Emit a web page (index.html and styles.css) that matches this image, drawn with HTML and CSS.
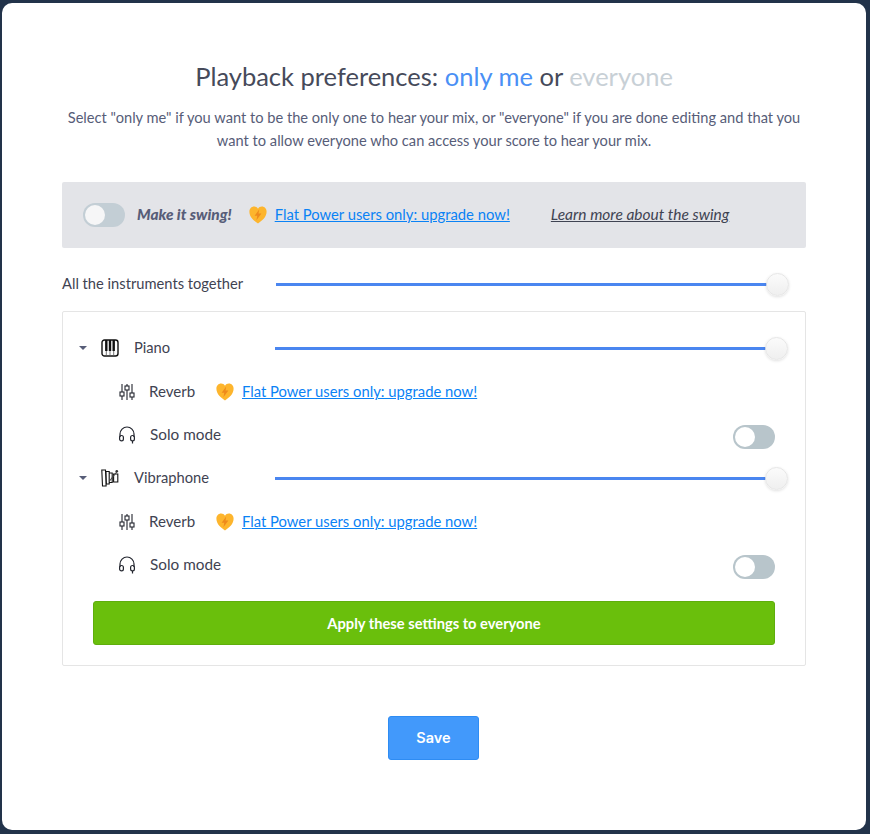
FILE: index.html
```html
<!DOCTYPE html>
<html lang="en">
<head>
<meta charset="utf-8">
<title>Playback preferences</title>
<link rel="stylesheet" href="styles.css">
</head>
<body>
<svg class="defs" width="0" height="0" aria-hidden="true">
  <symbol id="heart" viewBox="0 0 18 18">
    <path d="M9 17.6C4.6 14.4.4 11 .4 5.8.4 2.8 2.5.6 5.1.6 6.8.6 8.2 1.5 9 2.8 9.8 1.5 11.2.6 12.9.6c2.6 0 4.7 2.2 4.7 5.2 0 5.2-4.2 8.6-8.6 11.8z" fill="#fdb52d"/>
    <path d="M10.2 3.6 5.6 9.8h2.7L7.4 14.2 12.4 7.6H9.5z" fill="#ee8a1d"/>
  </symbol>
  <symbol id="mixer" viewBox="0 0 16 18">
    <g fill="none" stroke="#23262f" stroke-width="1.1">
      <path d="M3 1v8M3 13v4M8 1v2M8 7v10M13 1v9M13 14v3"/>
      <rect x="1" y="9" width="4" height="4"/>
      <rect x="6" y="3" width="4" height="4"/>
      <rect x="11" y="10" width="4" height="4"/>
    </g>
  </symbol>
  <symbol id="phones" viewBox="0 0 18 18">
    <g fill="none" stroke="#23262f" stroke-width="1.2">
      <path d="M2 11V8a7 7 0 0 1 14 0v3"/>
      <rect x="1.6" y="9.5" width="3.8" height="5.4" rx="1.9"/>
      <rect x="12.6" y="9.5" width="3.8" height="5.4" rx="1.9"/>
      <path d="M14.5 15v2.5"/>
    </g>
  </symbol>
  <symbol id="piano" viewBox="0 0 18 18">
    <rect x="1" y="1" width="16" height="16" rx="2.5" fill="none" stroke="#111" stroke-width="1.4"/>
    <path d="M4.1 1h2.4v11H4.1zM7.8 1h2.4v11H7.8zM11.500 1h2.400v11h-2.400z" fill="#111"/>
    <path d="M5.300 12v5M9 12v5M12.700 12v5" stroke="#555" stroke-width=".8"/>
  </symbol>
  <symbol id="vibes" viewBox="0 0 18 18">
    <g fill="none" stroke="#111" stroke-width="1.1">
      <path d="M.8 1h3.700l.6 16H1.500zM5 2.500h3.200v12.500H5.400zM8.200 4h3v9.500h-3zM12.600 5h4.200v8h-4.200z"/>
      <path d="M8.500 12 16.500 2" stroke="#444"/>
    </g>
    <circle cx="15.800" cy="2.200" r="1.300" fill="#333"/>
  </symbol>
</svg>
<main class="modal">
  <h1 class="title">Playback preferences: <span class="me">only me</span> or <span class="all">everyone</span></h1>
  <p class="intro">Select "only me" if you want to be the only one to hear your mix, or "everyone" if you are done editing and that you want to allow everyone who can access your score to hear your mix.</p>

  <section class="swing">
    <span class="toggle toggle-swing"></span>
    <strong class="swing-label">Make it swing!</strong>
    <svg class="heart"><use href="#heart"/></svg>
    <a class="upgrade" href="#">Flat Power users only: upgrade now!</a>
    <a class="learn" href="#">Learn more about the swing</a>
  </section>

  <div class="master">
    <span class="master-label">All the instruments together</span>
    <div class="slider"><span class="track"></span><span class="thumb"></span></div>
  </div>

  <section class="panel">
    <div class="row inst">
      <span class="caret"></span>
      <svg class="inst-icon"><use href="#piano"/></svg>
      <span class="inst-name">Piano</span>
      <div class="slider"><span class="track"></span><span class="thumb"></span></div>
    </div>
    <div class="row sub reverb">
      <svg class="sub-icon"><use href="#mixer"/></svg>
      <span class="sub-name">Reverb</span>
      <svg class="heart"><use href="#heart"/></svg>
      <a class="upgrade" href="#">Flat Power users only: upgrade now!</a>
    </div>
    <div class="row sub solo">
      <svg class="sub-icon"><use href="#phones"/></svg>
      <span class="sub-name">Solo mode</span>
      <span class="toggle toggle-end"></span>
    </div>
    <div class="row inst">
      <span class="caret"></span>
      <svg class="inst-icon"><use href="#vibes"/></svg>
      <span class="inst-name">Vibraphone</span>
      <div class="slider"><span class="track"></span><span class="thumb"></span></div>
    </div>
    <div class="row sub reverb">
      <svg class="sub-icon"><use href="#mixer"/></svg>
      <span class="sub-name">Reverb</span>
      <svg class="heart"><use href="#heart"/></svg>
      <a class="upgrade" href="#">Flat Power users only: upgrade now!</a>
    </div>
    <div class="row sub solo">
      <svg class="sub-icon"><use href="#phones"/></svg>
      <span class="sub-name">Solo mode</span>
      <span class="toggle toggle-end"></span>
    </div>
    <button class="apply" type="button">Apply these settings to everyone</button>
  </section>

  <div class="actions"><button class="save" type="button">Save</button></div>
</main>
</body>
</html>
```
FILE: styles.css
```css
* { box-sizing: border-box; }
html, body { height: 100%; }
body {
  margin: 0;
  overflow: hidden;
  background: #22334a;
  font-family: Lato, "Open Sans", sans-serif;
  color: #3f4352;
}
.defs { position: absolute; }
.modal {
  width: 864px;
  height: 827px;
  margin: 3px 0 0 2px;
  padding: 59px 60px 0;
  background: #fff;
  border-radius: 10px;
  display: flex;
  flex-direction: column;
}
.title {
  margin: 0;
  height: 29px;
  font-size: 25.5px;
  line-height: 28px;
  font-weight: 400;
  text-align: center;
  color: #464a5a;
}
.me { color: #4a90f5; }
.all { color: #c8d0d6; }
.intro {
  margin: 15px 0 0;
  padding: 0;
  height: 46px;
  font-size: 14.65px;
  line-height: 23px;
  text-align: center;
  color: #575d78;
}
.swing {
  margin-top: 30px;
  height: 66px;
  padding-left: 21px;
  display: flex;
  align-items: center;
  background: #e3e4e8;
  border-radius: 2px;
}
.toggle {
  display: block;
  flex: none;
  width: 42px;
  height: 24px;
  border-radius: 12px;
  background: #b8c5cb;
  position: relative;
}
.toggle::after {
  content: "";
  position: absolute;
  left: 2px;
  top: 2px;
  width: 20px;
  height: 20px;
  border-radius: 50%;
  background: #fff;
}
.toggle-swing { background: #c3ced5; }
.toggle-swing::after { background: #f6f6f7; }
.toggle-end { margin: 4px 30px 0 auto; }
.swing-label {
  margin: 0 0 2px 12px;
  font-style: italic;
  font-weight: 900;
  color: #575d78;
  font-size: 15.4px;
}
.heart { flex: none; width: 18px; height: 18px; }
.swing .heart { margin-left: 17px; }
.upgrade {
  margin: 0 0 2px 8px;
  font-size: 14.8px;
  color: #0a82f5;
  text-decoration: underline;
}
.learn {
  margin: 0 0 2px 41px;
  font-size: 15.5px;
  font-style: italic;
  color: #3f4352;
  text-decoration: underline;
}
.master {
  margin-top: 23px;
  height: 26px;
  display: flex;
  align-items: center;
  font-size: 14.7px;
}
.master-label { width: 214px; flex: none; margin-bottom: 2px; }
.slider {
  flex: 1;
  height: 24px;
  display: flex;
  align-items: center;
}
.track {
  flex: 1;
  height: 3px;
  background: #4a86f0;
}
.thumb {
  flex: none;
  width: 23px;
  height: 23px;
  margin-left: -1px;
  border-radius: 50%;
  border: 1px solid #e6e6e6;
  background: linear-gradient(#fbfbfb, #efefef);
  box-shadow: 0 1px 3px rgba(0, 0, 0, .12);
}
.master .slider { padding-right: 17px; }
.panel {
  margin-top: 14px;
  height: 355px;
  border: 1px solid #e5e5e5;
  border-radius: 2px;
  padding: 14px 30px 0 0;
  font-size: 14.7px;
  display: flex;
  flex-direction: column;
}
.row { display: flex; align-items: center; }
.inst { height: 44px; padding-left: 16px; margin-right: -13px; }
.caret {
  flex: none;
  width: 0;
  height: 0;
  border: 4px solid transparent;
  border-top: 4px solid #575d78;
  border-bottom: 0;
}
.inst-icon { flex: none; width: 18px; height: 18px; margin-left: 14px; }
.inst-name { width: 141px; flex: none; margin: 0 0 2px 15px; }
.sub { padding-left: 55px; }
.reverb { height: 44px; }
.solo { height: 43px; margin-right: -30px; }
.reverb + .solo { margin-top: -1px; }
.sub-icon { flex: none; width: 18px; height: 18px; }
.sub-name { margin-left: 13px; font-size: 15.1px; }
.solo .sub-name { margin: 0 0 2px 14px; font-size: 15.3px; }
.reverb .sub-name { width: 67px; flex: none; margin-bottom: 2px; }
.reverb .heart { margin-left: 0; }
.apply {
  margin: 15px 0 0 30px;
  height: 44px;
  width: 682px;
  flex: none;
  border: 1px solid #5fae0c;
  border-radius: 3px;
  background: #6abf0c;
  color: #fff;
  font: 700 14.7px Lato, sans-serif;
}
.actions {
  margin-top: 50px;
  display: flex;
  justify-content: center;
}
.save {
  width: 91px;
  height: 44px;
  margin-right: 1px;
  padding-bottom: 3px;
  border: 1px solid #2e8cf3;
  border-radius: 3px;
  background: #4299fb;
  color: #fff;
  font: 600 14.5px Inter, sans-serif;
}
```
